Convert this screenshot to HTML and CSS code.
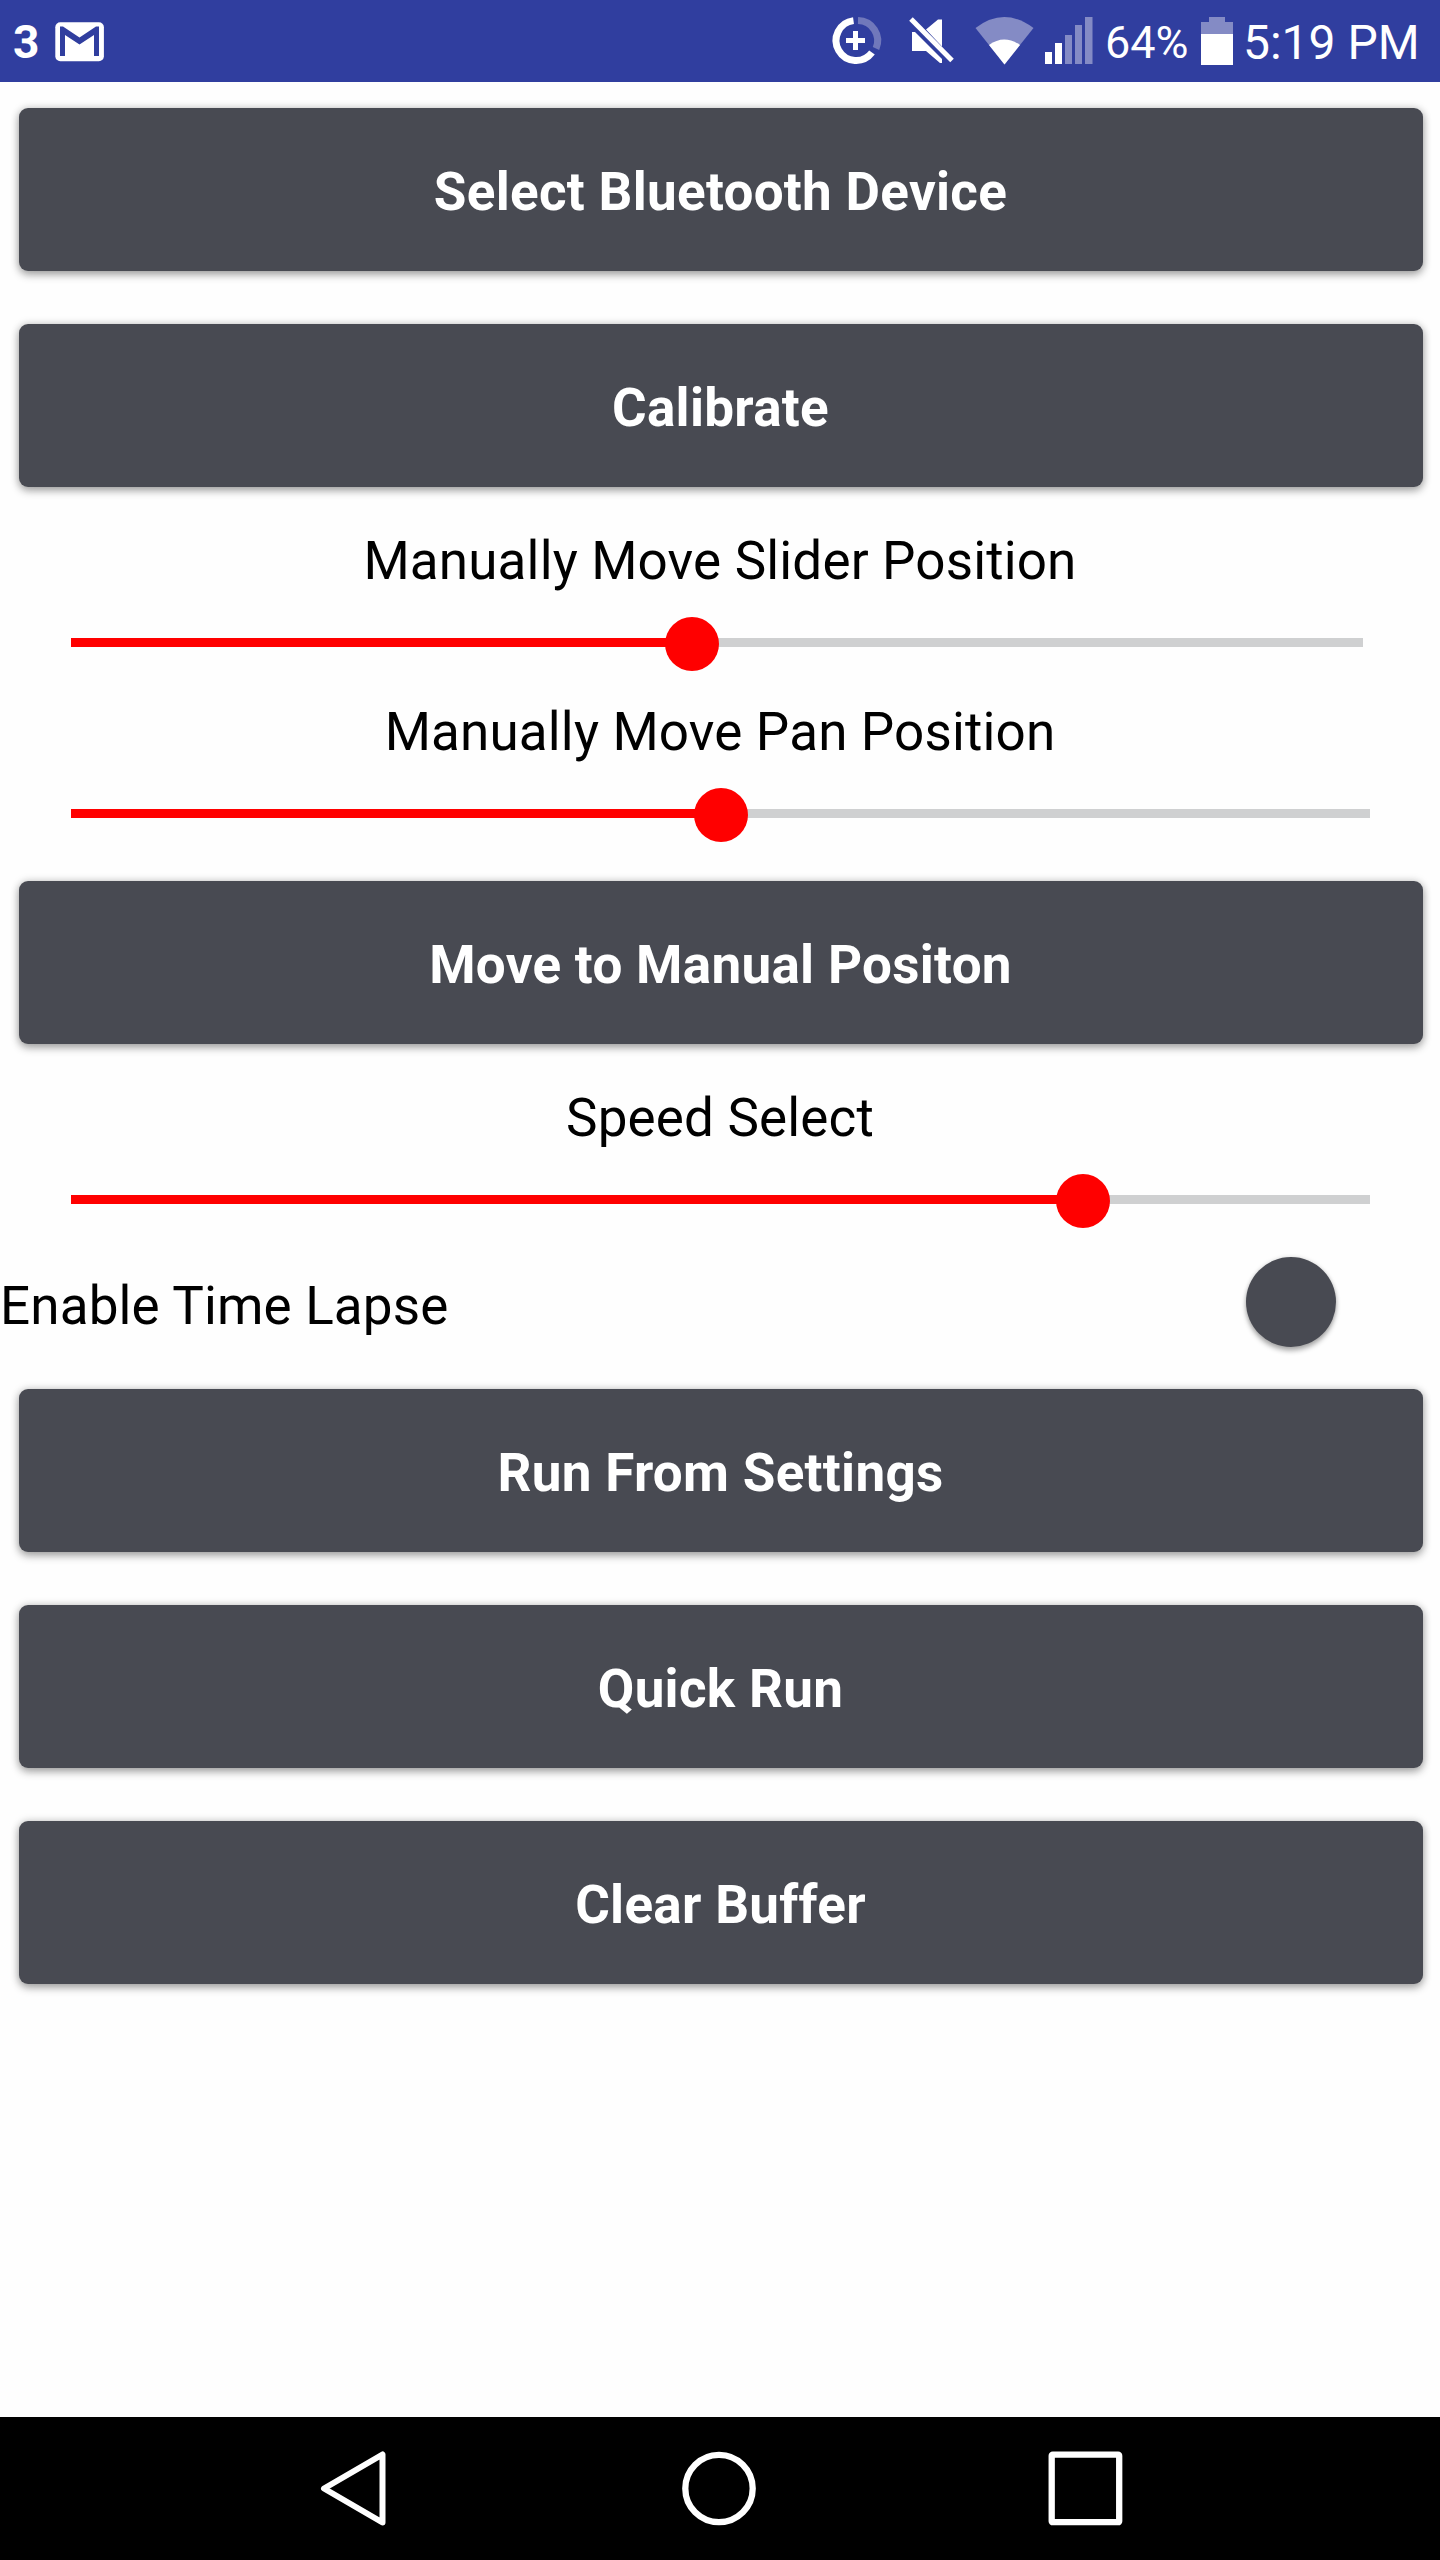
FILE: index.html
```html
<!DOCTYPE html>
<html lang="en">
<head>
<meta charset="utf-8">
<title>Slider Control</title>
<link rel="stylesheet" href="styles.css">
</head>
<body>
<div class="screen">
  <header class="status-bar">
    <span class="count">3</span>
    <svg class="mail" width="50" height="40" viewBox="0 0 50 40"><rect x=".3" y=".3" width="48.6" height="39" rx="5" fill="#fff"/><path d="M5 34V4.500H8L24.500 15.500 41 4.500H44V34H39V13L24.500 22.500 10 13V34Z" fill="#303e9f"/></svg>
    <svg class="icons" width="268" height="50" viewBox="0 0 268 50">
      <g fill="none" stroke-width="7">
        <path d="M28.500 3.600A20 20 0 1 0 47 35.500" stroke="#fff"/>
        <path d="M33 3.600A20 20 0 0 1 51 31.500" stroke="#7078bb"/>
      </g>
      <path d="M28 14h5v7h7v5h-7v7h-5v-7h-7v-5h7Z" fill="#fff"/>
      <path d="M87 15h3l27 27v4h-2L101 34H87ZM101 12.500l12-10h4v27Z" fill="#fff"/>
      <path d="M86 2L127 43.500" stroke="#fff" stroke-width="5"/>
      <path d="M150.500 11Q179 -11 208.500 11L179.500 47.500Z" fill="#848bc5"/>
      <path d="M164 28Q179 17 195 28L179.500 47.500Z" fill="#fff"/>
      <path d="M220 35h7v12h-7ZM230 26h7v21h-7Z" fill="#fff"/>
      <path d="M240 18h7v29h-7ZM250 8h7v39h-7ZM260 0h7.500v47H260Z" fill="#848bc5"/>
    </svg>
    <span class="percent">64%</span>
    <svg class="battery" width="32" height="48" viewBox="0 0 32 48"><path d="M8 0h16v5h8v12H0V5h8Z" fill="#848bc5"/><path d="M0 17h32v31H0Z" fill="#fff"/></svg>
    <span class="clock">5:19 PM</span>
  </header>
  <main class="content">
    <button class="btn">Select Bluetooth Device</button>
    <button class="btn">Calibrate</button>
    <section class="field">
      <div class="label">Manually Move Slider Position</div>
      <div class="track short"><div class="fill" style="width:620.500px"></div><div class="thumb"></div></div>
    </section>
    <section class="field compact">
      <div class="label">Manually Move Pan Position</div>
      <div class="track"><div class="fill" style="width:649.500px"></div><div class="thumb"></div></div>
    </section>
    <button class="btn">Move to Manual Positon</button>
    <section class="field">
      <div class="label">Speed Select</div>
      <div class="track"><div class="fill" style="width:1012px"></div><div class="thumb"></div></div>
    </section>
    <section class="toggle-row">
      <span class="toggle-label">Enable Time Lapse</span>
      <span class="knob"></span>
    </section>
    <button class="btn">Run From Settings</button>
    <button class="btn">Quick Run</button>
    <button class="btn">Clear Buffer</button>
  </main>
  <nav class="nav-bar">
    <svg width="66" height="76" viewBox="0 0 66 76"><path d="M4 37.500L62.500 3.500V71.500Z" fill="none" stroke="#fff" stroke-width="6" stroke-linejoin="round"/></svg>
    <svg width="76" height="76" viewBox="0 0 76 76"><circle cx="38" cy="37.500" r="33.700" fill="none" stroke="#fff" stroke-width="6.300"/></svg>
    <svg width="76" height="76" viewBox="0 0 76 76"><rect x="3.700" y="3.700" width="67.500" height="67.500" rx="1" fill="none" stroke="#fff" stroke-width="6.300"/></svg>
  </nav>
</div>
</body>
</html>
```
FILE: styles.css
```css
* { box-sizing: border-box; }
body { margin: 0; background: #fefefe; font-family: Roboto, "Liberation Sans", sans-serif; color: #000; }
.screen { width: 1440px; height: 2560px; display: flex; flex-direction: column; }
.status-bar { height: 82px; background: #303e9f; color: #fff; display: flex; align-items: flex-start; padding-left: 13px; white-space: nowrap; }
.status-bar svg { flex: none; }
.count { font-size: 46px; font-weight: 700; line-height: 54px; margin-top: 15px; width: 42px; }
.mail { margin-top: 22px; }
.icons { margin: 17px 0 0 720px; }
.percent { font-size: 45px; line-height: 54px; margin-top: 16px; margin-left: 12px; width: 96px; }
.battery { margin-top: 17px; }
.clock { font-size: 48px; line-height: 58px; margin: 14px 0 0 10px; }
.content { flex: 1; display: flex; flex-direction: column; }
.btn { flex: none; height: 163px; margin: 26px 17.500px 27px 18.500px; padding: 4px 0 0; border: 0; border-radius: 9px; background: #484a52; color: #fff; font: 700 53px/62px Roboto, "Liberation Sans", sans-serif; letter-spacing: .3px; box-shadow: 0 4px 8px rgba(0,0,0,.3), 0 0 8px rgba(0,0,0,.18); }
.field { flex: none; height: 171px; padding-top: 16px; }
.field.compact { height: 170px; }
.label { height: 62px; font-size: 53px; line-height: 62px; letter-spacing: .15px; text-align: center; }
.track { display: flex; align-items: center; height: 9px; width: 1299px; margin: 46px 0 0 71px; background: #cfd0d1; }
.track.short { width: 1292px; }
.fill { height: 9px; background: #f00; }
.thumb { flex: none; width: 54px; height: 54px; margin: 2px 0 0 -27px; border-radius: 50%; background: #f00; }
.toggle-row { flex: none; height: 121px; display: flex; align-items: center; justify-content: space-between; padding-right: 104.500px; font-size: 53px; line-height: 62px; letter-spacing: .15px; }
.toggle-label { padding-top: 6px; }
.knob { width: 90px; height: 90px; margin-bottom: 1px; border-radius: 50%; background: #484a52; box-shadow: 0 4px 5px rgba(0,0,0,.3), 0 0 4px rgba(0,0,0,.15); }
.nav-bar { height: 143px; background: #000; display: flex; align-items: flex-start; padding: 34px 0 0 320px; }
.nav-bar svg:nth-child(2) { margin-left: 295px; }
.nav-bar svg:nth-child(3) { margin-left: 291px; }
```
